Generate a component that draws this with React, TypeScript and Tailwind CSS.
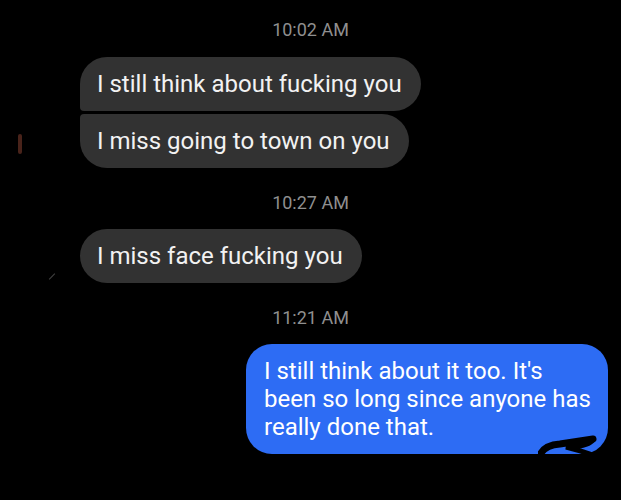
import React from "react";

type Msg = { text: string; corner: string };

function Stamp({ time }: { time: string }) {
  return (
    <div className="text-center text-[18px] leading-[22px] text-[#8f8f8f]">{time}</div>
  );
}

function Incoming({ text, corner }: Msg) {
  return (
    <div className="flex pl-[80px]">
      <div
        className={`bg-[#323232] text-[#f2f2f2] text-[24px] leading-[28px] pl-[17px] pr-[19px] py-[13px] ${corner}`}
      >
        {text}
      </div>
    </div>
  );
}

export default function App() {
  return (
    <div
      className="relative h-[500px] w-[621px] overflow-hidden bg-black"
      style={{ fontFamily: "Roboto, 'Noto Sans', sans-serif" }}
    >
      {/* little bits of noise from the photo */}
      <span className="absolute left-[18px] top-[134px] h-[20px] w-[4px] rounded-full bg-[#7a3a2c] opacity-60" />
      <span className="absolute left-[48px] top-[276px] h-[1px] w-[8px] -rotate-45 bg-[#444]" />

      <div className="flex flex-col pt-[19px]">
        <Stamp time="10:02 AM" />
        <div className="mt-[16px] flex flex-col gap-[3px]">
          <Incoming text="I still think about fucking you" corner="rounded-[27px] rounded-bl-[4px]" />
          <Incoming text="I miss going to town on you" corner="rounded-[27px] rounded-tl-[4px]" />
        </div>

        <div className="mt-[24px]">
          <Stamp time="10:27 AM" />
        </div>
        <div className="mt-[15px]">
          <Incoming text="I miss face fucking you" corner="rounded-[27px]" />
        </div>

        <div className="mt-[24px]">
          <Stamp time="11:21 AM" />
        </div>
        <div className="mt-[15px] flex justify-end pr-[13px]">
          <div className="relative w-[362px] rounded-[26px] bg-[#2d6cf4] pl-[18px] pr-[12px] py-[13px] text-[24px] leading-[28px] text-white">
            I still think about it too. It's been so long since anyone has really done that.
            <svg
              className="absolute left-[292px] top-[90px]"
              width="62"
              height="22"
              viewBox="0 0 62 22"
            >
              <path
                d="M3 19 Q8 11 22 10 L55 5"
                stroke="#000"
                strokeWidth="7"
                strokeLinecap="round"
                fill="none"
              />
              <path
                d="M54 7 Q48 13 28 13 Q40 16 52 20"
                stroke="#000"
                strokeWidth="5"
                strokeLinecap="round"
                fill="none"
              />
            </svg>
          </div>
        </div>
      </div>
    </div>
  );
}
